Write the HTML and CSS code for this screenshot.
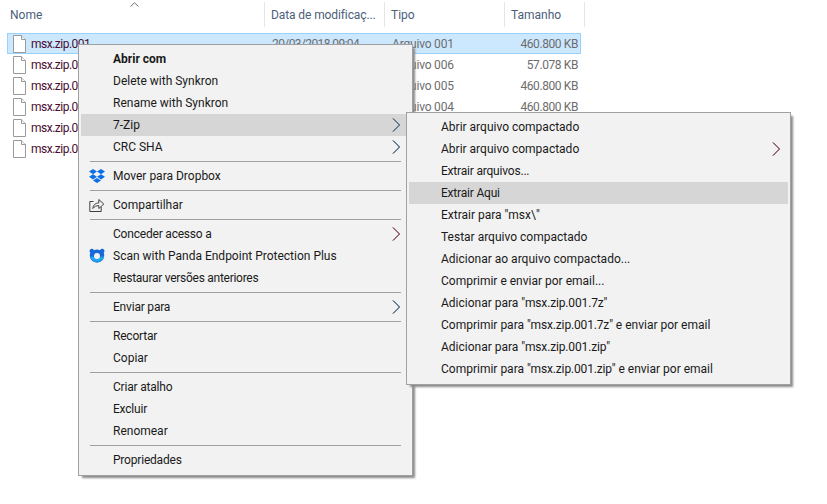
FILE: index.html
```html
<!DOCTYPE html>
<html lang="pt">
<head>
<meta charset="utf-8">
<title>Explorador de Arquivos</title>
<link rel="stylesheet" href="styles.css">
</head>
<body>
<svg width="0" height="0" class="defs">
  <symbol id="file" viewBox="0 0 13 18">
    <path d="M.5.5h8l4 4v13H.5z" fill="#fff" stroke="#9a9a9a"/>
    <path d="M8.5.5v4h4" fill="#f4f4f4" stroke="#9a9a9a"/>
  </symbol>
  <symbol id="chev" viewBox="0 0 9 14">
    <g fill="none" stroke-width=".8">
      <path d="M.7.5 7.200 7 .7 13.500" stroke="#c98a50"/>
      <path d="M1.400.5 7.900 7 1.400 13.500" stroke="#3f9cf0"/>
      <path d="M1 .5 7.500 7 1 13.500" stroke="#2b3f5c"/>
    </g>
  </symbol>
  <symbol id="chev-warm" viewBox="0 0 9 14">
    <g fill="none" stroke-width=".8">
      <path d="M.7.5 7.200 7 .7 13.500" stroke="#d0523c"/>
      <path d="M1.400.5 7.900 7 1.400 13.500" stroke="#7a90c8"/>
      <path d="M1 .5 7.500 7 1 13.500" stroke="#6a2f3c"/>
    </g>
  </symbol>
</svg>
<main class="explorer">
  <header class="head">
    <span class="sort"><svg width="9" height="5" viewBox="0 0 9 5"><path d="M.5 4.500 4.500.8l4 3.700" fill="none" stroke="#6d6d6d"/></svg></span>
    <div class="hcol hname">Nome</div>
    <div class="hcol hdate">Data de modificaç...</div>
    <div class="hcol htype">Tipo</div>
    <div class="hcol hsize">Tamanho</div>
  </header>
  <section class="rows">
    <div class="row selected"><span class="name"><svg class="ficon"><use href="#file"/></svg><span class="fname">msx.zip.001</span></span><span class="date">20/03/2018 09:04</span><span class="type">Arquivo 001</span><span class="size">460.800 KB</span></div>
    <div class="row"><span class="name"><svg class="ficon"><use href="#file"/></svg><span class="fname">msx.zip.006</span></span><span class="date"></span><span class="type">Arquivo 006</span><span class="size">57.078 KB</span></div>
    <div class="row"><span class="name"><svg class="ficon"><use href="#file"/></svg><span class="fname">msx.zip.005</span></span><span class="date"></span><span class="type">Arquivo 005</span><span class="size">460.800 KB</span></div>
    <div class="row"><span class="name"><svg class="ficon"><use href="#file"/></svg><span class="fname">msx.zip.004</span></span><span class="date"></span><span class="type">Arquivo 004</span><span class="size">460.800 KB</span></div>
    <div class="row"><span class="name"><svg class="ficon"><use href="#file"/></svg><span class="fname">msx.zip.003</span></span></div>
    <div class="row"><span class="name"><svg class="ficon"><use href="#file"/></svg><span class="fname">msx.zip.002</span></span></div>
  </section>
</main>

<nav class="menu menu-main">
  <div class="item bold">Abrir com</div>
  <div class="item">Delete with Synkron</div>
  <div class="item">Rename with Synkron</div>
  <div class="item active">7-Zip<svg class="chev"><use href="#chev"/></svg></div>
  <div class="item">CRC SHA<svg class="chev"><use href="#chev"/></svg></div>
  <hr class="sep">
  <div class="item">
    <svg class="micon" viewBox="0 0 16 14"><path fill="#0b6fe6" d="M4 0 8 2.600 4 5.200 0 2.600zM12 0l4 2.600-4 2.600L8 2.600zM4 5.200 8 7.800l-4 2.600L0 7.800zM12 5.200l4 2.600-4 2.600-4-2.600zM8 8.900l4 2.500L8 14l-4-2.600z"/></svg>
    Mover para Dropbox</div>
  <hr class="sep">
  <div class="item">
    <svg class="micon" viewBox="0 0 16 16"><path fill="none" stroke="#404040" d="M4.500 4.500H.8v10h11.400V10"/><path fill="none" stroke="#404040" d="M3.800 11.500c.3-3.400 2.500-5.600 6-5.600V2.500l5 4.600-5 4.400V8.600c-2.500 0-4.300.9-6 2.900z"/></svg>
    Compartilhar</div>
  <hr class="sep">
  <div class="item tight">Conceder acesso a<svg class="chev"><use href="#chev-warm"/></svg></div>
  <div class="item">
    <svg class="micon" viewBox="0 0 16 16"><path fill="#1769d8" d="M2.500 .8a2.300 2.300 0 0 1 2.400 1.400A7.500 7.500 0 0 1 8 1.500c1.100 0 2.200.3 3.100.7A2.300 2.300 0 0 1 15.500 3c0 .8-.3 1.400-.8 1.800A7.200 7.200 0 1 1 1.300 4.800 2.300 2.300 0 0 1 2.500 .8z"/><path d="M1.100 8a7 7 0 0 0 13.800 0c-1 .6-3 .9-6.900.9S2.100 8.600 1.100 8z" fill="#20a8f0"/><circle cx="8" cy="8" r="3" fill="#f2f2f2"/></svg>
    Scan with Panda Endpoint Protection Plus</div>
  <div class="item tighter">Restaurar versões anteriores</div>
  <hr class="sep">
  <div class="item tight">Enviar para<svg class="chev"><use href="#chev"/></svg></div>
  <hr class="sep">
  <div class="item tight">Recortar</div>
  <div class="item">Copiar</div>
  <hr class="sep">
  <div class="item tight">Criar atalho</div>
  <div class="item tight">Excluir</div>
  <div class="item">Renomear</div>
  <hr class="sep">
  <div class="item tight">Propriedades</div>
</nav>

<nav class="menu menu-sub">
  <div class="item">Abrir arquivo compactado</div>
  <div class="item">Abrir arquivo compactado<svg class="chev"><use href="#chev-warm"/></svg></div>
  <div class="item tight">Extrair arquivos...</div>
  <div class="item tight active">Extrair Aqui</div>
  <div class="item">Extrair para "msx\"</div>
  <div class="item">Testar arquivo compactado</div>
  <div class="item">Adicionar ao arquivo compactado...</div>
  <div class="item">Comprimir e enviar por email...</div>
  <div class="item"><span>Adicionar para <span class="quoted">"msx.zip.001.7z"</span></span></div>
  <div class="item"><span>Comprimir para <span class="quoted">"msx.zip.001.7z"</span> e enviar por email</span></div>
  <div class="item"><span>Adicionar para <span class="quoted">"msx.zip.001.zip"</span></span></div>
  <div class="item"><span>Comprimir para <span class="quoted">"msx.zip.001.zip"</span> e enviar por email</span></div>
</nav>
</body>
</html>
```
FILE: styles.css
```css
* { box-sizing: border-box; }
html, body { margin: 0; height: 100%; background: #fff; overflow: hidden; }
body { font: 12px/1 Roboto, "Noto Sans", sans-serif; color: #000; position: relative; }
.defs { position: absolute; }

.explorer { display: flex; flex-direction: column; }
.head { display: grid; grid-template-columns: 265px 120px 120px 80px; height: 33px; padding-top: 2px; position: relative; align-items: start; color: #4c607a; }
.sort { position: absolute; left: 130px; top: 2px; display: flex; }
.hcol { height: 25px; line-height: 26px; border-right: 1px solid #e5e5e5; white-space: nowrap; }
.hname { padding-left: 10px; }
.hdate { padding-left: 6px; letter-spacing: -.1px; }
.htype { padding-left: 6px; }
.hsize { padding-left: 6px; }

.rows { display: flex; flex-direction: column; margin-left: 7px; width: 574px; }
.row { display: grid; grid-template-columns: 257px 120px 120px 77px; height: 21px; align-items: center; border: 1px solid transparent; color: #6d6d6d; white-space: nowrap; }
.row.selected { background: #cce8ff; border-color: #99d1ff; }
.name { display: flex; align-items: center; gap: 5px; padding-left: 5px; color: #4a0d2e; }
.fname { letter-spacing: -.5px; }
.ficon { width: 13px; height: 18px; flex: none; }
.date { padding-left: 7px; letter-spacing: -.6px; }
.type { padding-left: 7px; letter-spacing: -.2px; }
.size { text-align: right; padding-right: 4px; letter-spacing: -.4px; }

.menu { position: absolute; background: #f2f2f2; border: 1px solid #a0a0a0; padding: 3px 2px; box-shadow: 3px 3px 2px -1px #8a8a8a; color: #1a1a1a; }
.menu-main { left: 78px; top: 44px; width: 335px; height: 432px; }
.menu-sub { left: 406px; top: 112px; width: 385px; height: 273px; }
.item { display: flex; align-items: center; height: 22px; padding-left: 32px; position: relative; white-space: nowrap; }
.item.active { background: #d6d6d6; }
.bold { font-weight: 700; }
.tight { letter-spacing: -.2px; }
.tighter { letter-spacing: -.27px; }
.quoted { letter-spacing: -.15px; }
.chev { position: absolute; right: 9px; top: 4px; width: 9px; height: 14px; }
.menu-sub .chev { right: 7px; }
.micon { position: absolute; left: 8px; top: 3px; width: 16px; height: 16px; }
.sep { border: 0; height: 1px; background: #a0a0a0; margin: 3px 9px; }
```
